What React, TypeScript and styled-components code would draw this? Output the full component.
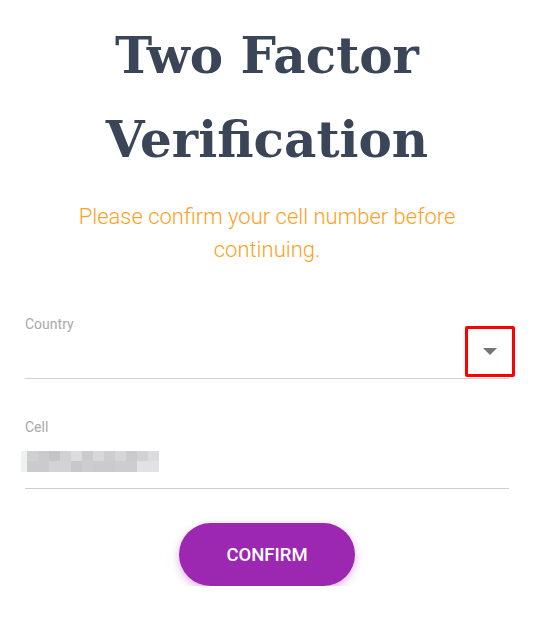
import React from "react";
import styled, { createGlobalStyle } from "styled-components";

const Global = createGlobalStyle`
  html, body { margin: 0; padding: 0; background: #ffffff; }
  body { font-family: Roboto, "Noto Sans", sans-serif; }
`;

const Page = styled.div`
  display: flex;
  flex-direction: column;
  padding: 14px 28px 0 25px;
`;

const Title = styled.h1`
  margin: 0;
  text-align: center;
  font-family: "DejaVu Serif", "Liberation Serif", serif;
  font-weight: 700;
  font-size: 50px;
  line-height: 84px;
  color: #3a4658;
  letter-spacing: 0;
`;

const Subtitle = styled.p`
  margin: 18px 0 0;
  text-align: center;
  font-family: Roboto, sans-serif;
  font-weight: 300;
  font-size: 22px;
  line-height: 33px;
  color: #fca223;
  padding: 0 40px;
`;

const Field = styled.div<{ $top: number }>`
  margin-top: ${(p) => p.$top}px;
  display: flex;
  flex-direction: column;
  border-bottom: 1px solid #cfcfcf;
`;

const Label = styled.label`
  font-family: Roboto, sans-serif;
  font-size: 14px;
  line-height: 16px;
  color: #a9a9a9;
`;

const SelectRow = styled.div`
  height: 46px;
  position: relative;
`;

const ArrowBox = styled.div`
  position: absolute;
  box-sizing: border-box;
  right: -6px;
  top: -6px;
  width: 50px;
  height: 51px;
  border: 3px solid #ff0000;
  border-radius: 2px;
  display: flex;
  align-items: center;
  justify-content: center;
`;

const ValueRow = styled.div`
  height: 53px;
  display: flex;
  align-items: center;
  margin-left: -4px;
`;

const Pixels = styled.div`
  display: grid;
  grid-template-columns: 6px repeat(12, 11px);
  grid-template-rows: 10px 11px;
`;

const Cell = styled.div<{ $c: string }>`
  background: ${(p) => p.$c};
`;

const ButtonRow = styled.div`
  display: flex;
  justify-content: center;
  margin-top: 34px;
`;

const ConfirmButton = styled.button`
  width: 176px;
  height: 63px;
  border: none;
  border-radius: 32px;
  background: #9c27b0;
  color: #ffffff;
  font-family: Roboto, sans-serif;
  font-weight: 500;
  font-size: 18.5px;
  letter-spacing: 0;
  box-shadow: 0 3px 8px rgba(156, 39, 176, 0.35);
  cursor: pointer;
`;

const row1 = ["#eff1f0", "#d0d0d2", "#cbcbcd", "#c4c4c6", "#d2d2d4", "#dcdcde", "#cbcbcd", "#d8d8da", "#cdcdcf", "#d6d6d8", "#cbcbcd", "#d2d2d4", "#dcdcde"];
const row2 = ["#eff1f0", "#cbcbcd", "#cbcbcd", "#d3d3d5", "#d3d3d5", "#c8c8ca", "#cdcdcf", "#cbcbcd", "#cbcbcd", "#cdcdcf", "#cdcdcf", "#e2e2e4", "#e2e2e4"];

export default function App() {
  return (
    <>
      <Global />
      <Page>
        <Title>
          Two Factor
          <br />
          Verification
        </Title>
        <Subtitle>Please confirm your cell number before continuing.</Subtitle>
        <Field $top={50}>
          <Label>Country</Label>
          <SelectRow>
            <ArrowBox>
              <svg width="14" height="7" viewBox="0 0 14 7">
                <path d="M0 0 L14 0 L7 7 Z" fill="#757575" />
              </svg>
            </ArrowBox>
          </SelectRow>
        </Field>
        <Field $top={40}>
          <Label>Cell</Label>
          <ValueRow>
            <Pixels>
              {row1.concat(row2).map((c, i) => (
                <Cell key={i} $c={c} />
              ))}
            </Pixels>
          </ValueRow>
        </Field>
        <ButtonRow>
          <ConfirmButton>CONFIRM</ConfirmButton>
        </ButtonRow>
      </Page>
    </>
  );
}
